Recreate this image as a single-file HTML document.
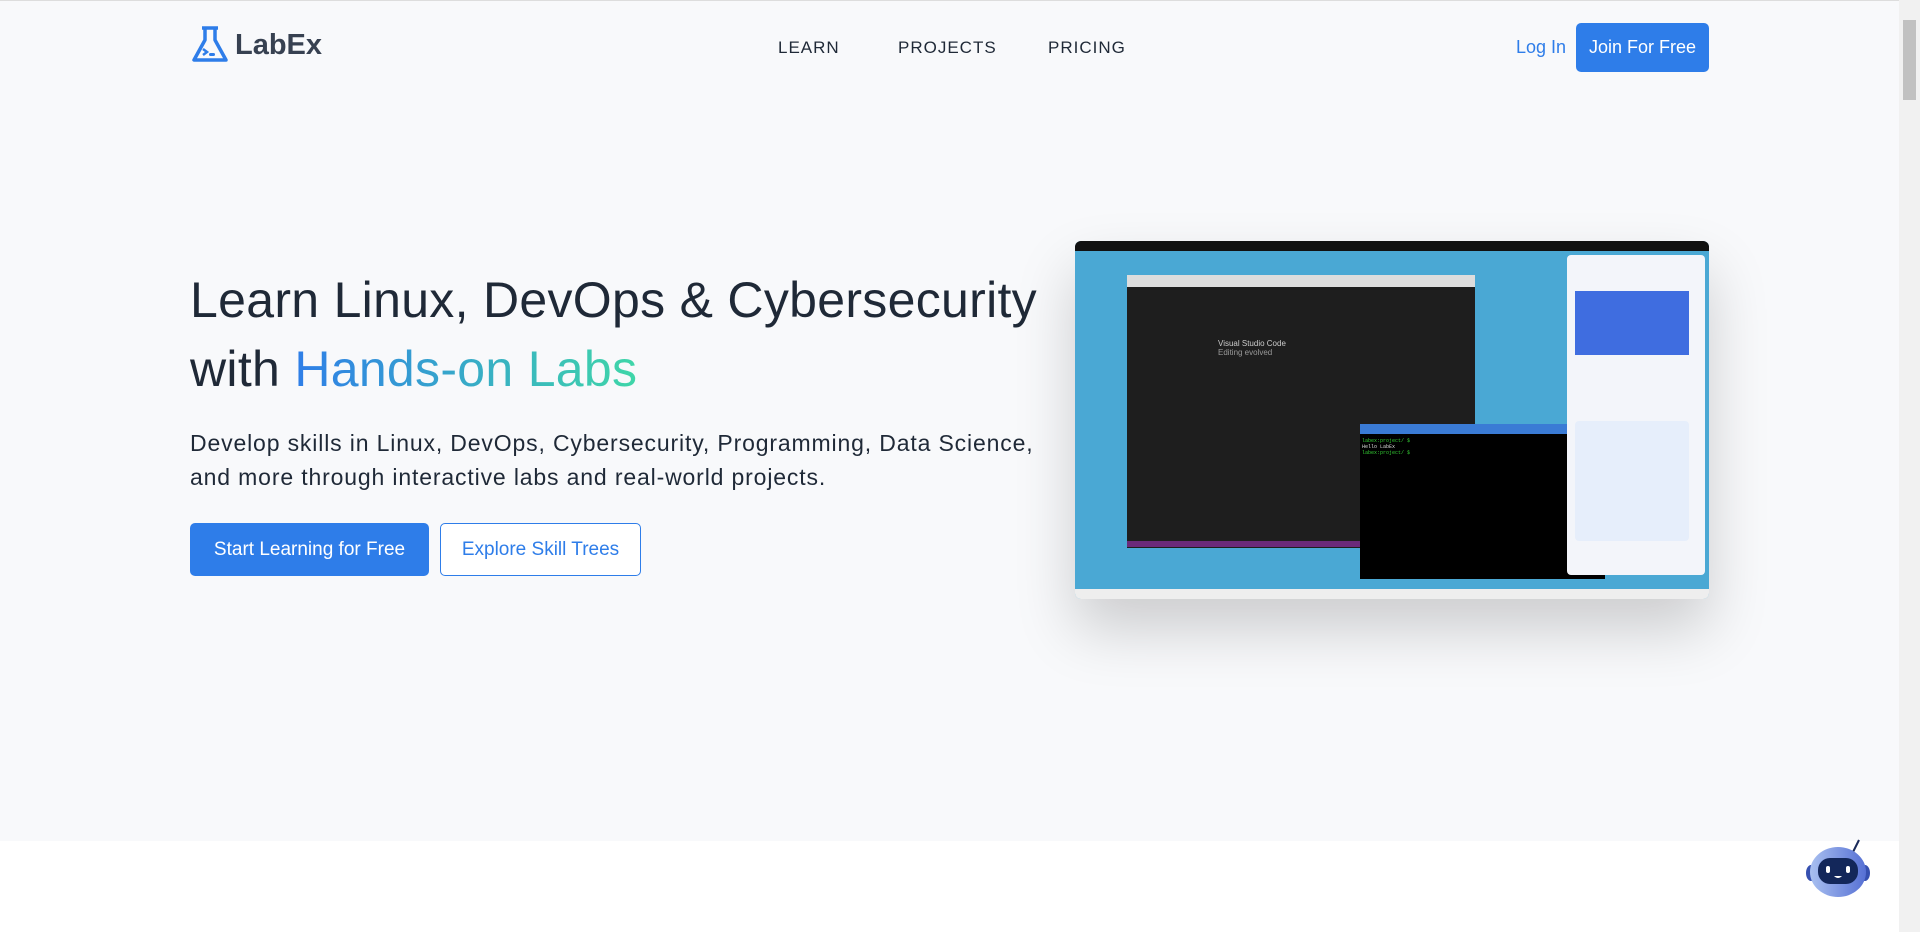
<!DOCTYPE html>
<html><head><meta charset="utf-8"><style>
*{margin:0;padding:0;box-sizing:border-box}
body{width:1920px;height:932px;overflow:hidden;font-family:"Liberation Sans",sans-serif;background:#fff;position:relative}
.hero{position:absolute;left:0;top:0;width:1899px;height:841px;background:#f8f9fb;border-top:1px solid #ddd}
.sb{position:absolute;right:0;top:0;width:21px;height:932px;background:#f1f1f1}
.sb div{position:absolute;left:4px;top:20px;width:13px;height:80px;background:#c1c1c1}
.logo{position:absolute;left:191px;top:24px;display:flex;align-items:center;gap:6px;font-size:29px;font-weight:bold;color:#374151}
.nav a{position:absolute;top:37px;font-size:17px;color:#1f2937;letter-spacing:1px;font-weight:500}
.login{position:absolute;left:1516px;top:36px;font-size:18px;color:#2e7de9}
.join{position:absolute;left:1576px;top:22px;width:133px;height:49px;background:#2e7de9;color:#fff;border-radius:5px;font-size:18px;display:flex;align-items:center;justify-content:center}
h1{position:absolute;left:190px;top:265px;font-size:50px;font-weight:normal;color:#1f2937;line-height:69px;letter-spacing:0.3px}
.grad{background:linear-gradient(90deg,#2f7ee8,#3fd6a8);-webkit-background-clip:text;color:transparent}
p.d{position:absolute;left:190px;top:425px;font-size:23px;line-height:34px;color:#1f2937;letter-spacing:0.85px}
.b1{position:absolute;left:190px;top:522px;width:239px;height:53px;background:#2e7de9;color:#fff;border-radius:5px;font-size:19px;display:flex;align-items:center;justify-content:center}
.b2{position:absolute;left:440px;top:522px;width:201px;height:53px;border:1.5px solid #2e7de9;color:#2e7de9;border-radius:5px;font-size:19px;display:flex;align-items:center;justify-content:center;background:#fff}
.shot{position:absolute;left:1075px;top:240px;width:634px;height:358px;background:#4aa8d4;border-radius:6px;overflow:hidden;box-shadow:0 30px 60px rgba(0,0,0,.18)}
</style></head><body>
<div class="hero">
<div class="logo"><svg width="38" height="40" viewBox="0 0 38 40"><path d="M11 3h16M14 3v12L3 35h32L24 15V3" fill="none" stroke="#2e7de9" stroke-width="3.5" stroke-linejoin="round"/><path d="M12 24l4 3-4 3" stroke="#2e7de9" stroke-width="2.5" fill="none"/><rect x="18" y="28" width="6" height="3" rx="1.5" fill="#2e7de9"/></svg>LabEx</div>
<div class="nav"><a style="left:778px">LEARN</a><a style="left:898px">PROJECTS</a><a style="left:1048px">PRICING</a></div>
<div class="login">Log In</div>
<div class="join">Join For Free</div>
<h1>Learn Linux, DevOps &amp; Cybersecurity<br>with <span class="grad">Hands-on Labs</span></h1>
<p class="d">Develop skills in Linux, DevOps, Cybersecurity, Programming, Data Science,<br>and more through interactive labs and real-world projects.</p>
<div class="b1">Start Learning for Free</div>
<div class="b2">Explore Skill Trees</div>
<div class="shot">
 <div style="position:absolute;left:0;top:0;width:634px;height:10px;background:#111"></div>
 <div style="position:absolute;left:52px;top:34px;width:348px;height:273px;background:#1e1e1e;border-top:12px solid #ddd"></div>
 <div style="position:absolute;left:52px;top:300px;width:348px;height:6px;background:#6b2a7a"></div>
 <div style="position:absolute;left:143px;top:98px;color:#ccc;font-size:8px">Visual Studio Code<br><span style="color:#999">Editing evolved</span></div>
 <div style="position:absolute;left:285px;top:183px;width:245px;height:155px;background:#000;border-top:10px solid #3a7bd5"></div>
 <div style="position:absolute;left:287px;top:197px;font:5px 'Liberation Mono',monospace;color:#3c3">labex:project/ $<br><span style="color:#ddd">Hello LabEx</span><br>labex:project/ $</div>
 <div style="position:absolute;left:492px;top:14px;width:138px;height:320px;background:#f3f5fa;border-radius:4px"></div>
 <div style="position:absolute;left:500px;top:50px;width:114px;height:64px;background:#3f6de0"></div>
 <div style="position:absolute;left:500px;top:180px;width:114px;height:120px;background:#e6eefb;border-radius:4px"></div>
 <div style="position:absolute;left:0;top:348px;width:634px;height:10px;background:#eee"></div>
</div>
</div>
<svg style="position:absolute;left:1803px;top:838px" width="70" height="62" viewBox="0 0 70 62"><defs><linearGradient id="g" x1="0" x2="1"><stop offset="0" stop-color="#a9c0f0"/><stop offset="1" stop-color="#5670d4"/></linearGradient></defs><line x1="50" y1="14" x2="56" y2="2" stroke="#1a2a5a" stroke-width="2"/><ellipse cx="8" cy="35" rx="5" ry="8" fill="#3650b0"/><ellipse cx="62" cy="35" rx="5" ry="8" fill="#3650b0"/><ellipse cx="35" cy="34" rx="28" ry="25" fill="url(#g)"/><rect x="15" y="20" width="40" height="26" rx="12" fill="#13275a"/><rect x="23" y="28" width="4" height="7" rx="2" fill="#fff"/><rect x="43" y="28" width="4" height="7" rx="2" fill="#fff"/><path d="M31 38q4 4 8 0z" fill="#fff"/></svg>
<div class="sb"><div></div></div>
</body></html>
